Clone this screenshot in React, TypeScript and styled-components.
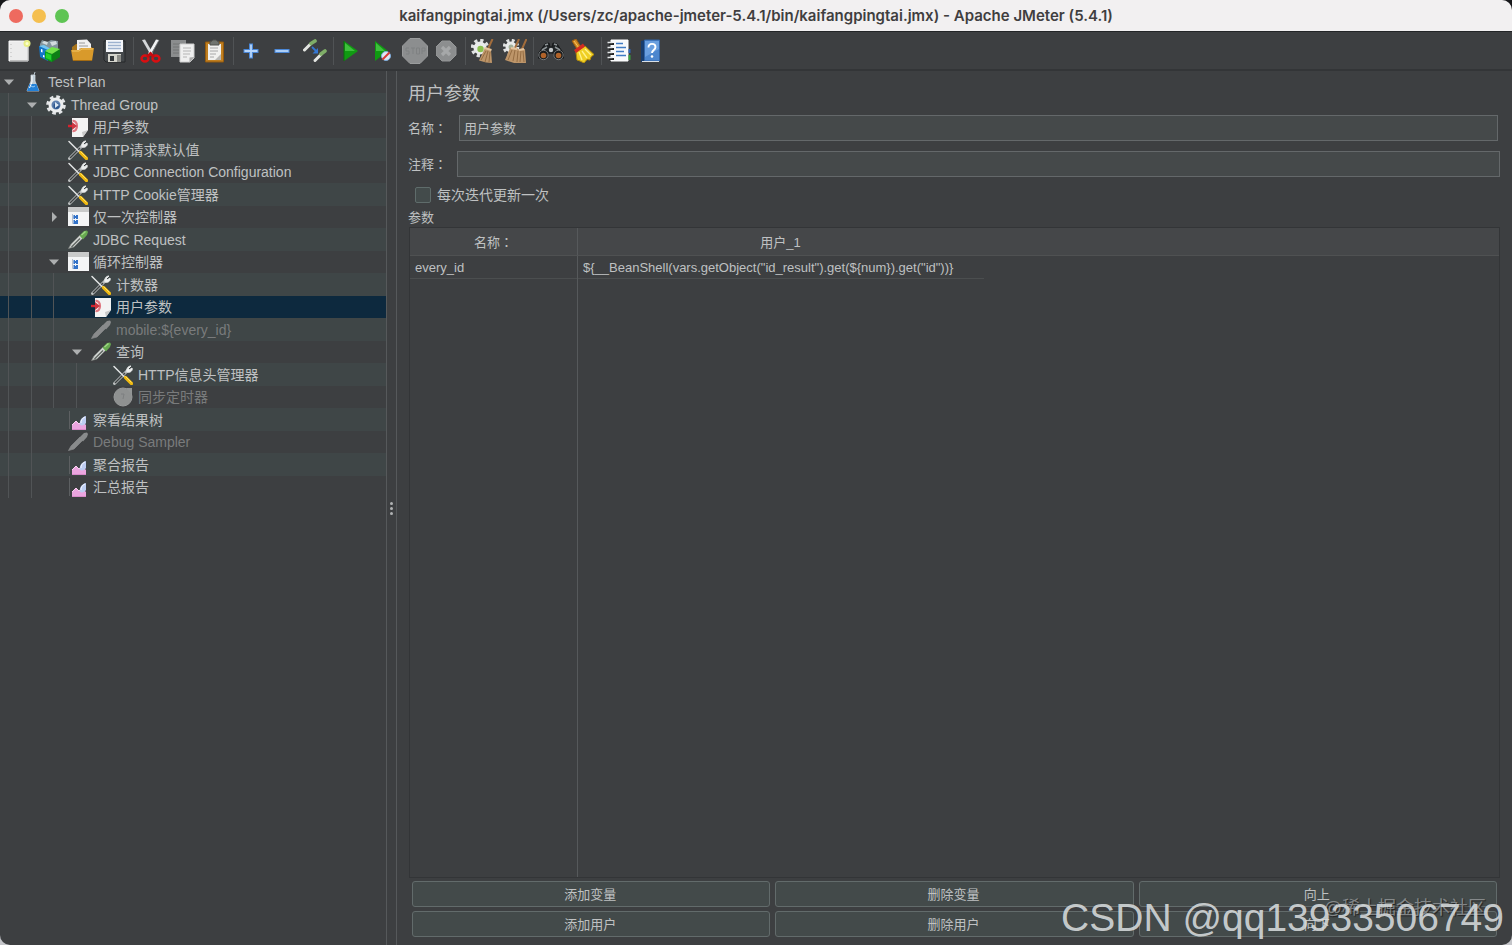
import React from 'react';
import styled, { createGlobalStyle, css } from 'styled-components';

const sans = `"Liberation Sans", "Noto Sans CJK SC", sans-serif`;

const color = {
  panel: '#3d3f41',
  stripe: '#3f4647',
  selected: '#0d293e',
  field: '#45494a',
  line: '#56595b',
  edge: '#333537',
  fieldLine: '#64686a',
  text: '#bfc1c2',
  muted: '#797b7c',
};

const GlobalStyle = createGlobalStyle`
  html { background: linear-gradient(#17171a 50%, #c4c5c9 50%); height: 100%; }
  body { margin: 0; font-family: ${sans}; font-size: 14px; color: ${color.text}; }
  *, *::before, *::after { box-sizing: border-box; }
  svg { flex: none; }
`;

const Window = styled.div`
  position: relative;
  display: flex;
  flex-direction: column;
  min-height: 100vh;
  border-radius: 10px;
  overflow: hidden;
  background: ${color.panel};
`;

const TitleBar = styled.header`
  position: relative;
  display: flex;
  align-items: center;
  justify-content: center;
  height: 32px;
  background: #f2f0f1;
  border-bottom: 1px solid #232527;
`;

const Lights = styled.div`
  position: absolute;
  left: 9px;
  top: 9px;
  display: flex;
  gap: 9px;
`;

const Light = styled.button<{ $tone: string }>`
  width: 14px;
  height: 14px;
  padding: 0;
  border: 0;
  border-radius: 50%;
  background: ${(p) => p.$tone};
`;

const Title = styled.h1`
  margin: 0;
  font: 600 15px/30px Inter, sans-serif;
  color: #403e3f;
  white-space: nowrap;
`;

const Toolbar = styled.div`
  display: flex;
  align-items: center;
  height: 39px;
  padding-left: 3px;
  border-bottom: 2px solid ${color.edge};
`;

const ToolButton = styled.button`
  display: flex;
  align-items: center;
  justify-content: center;
  width: 32px;
  height: 32px;
  padding: 0;
  border: 0;
  background: none;
`;

const Separator = styled.span`
  width: 1px;
  height: 28px;
  margin: 0 1px 0 2px;
  background: #505355;
`;

const Body = styled.div`
  display: flex;
  flex: 1;
`;

const Tree = styled.ul`
  width: 386px;
  flex: none;
  margin: 0;
  padding: 0;
  list-style: none;
`;

const TreeRow = styled.li<{ $selected?: boolean; $disabled?: boolean }>`
  display: flex;
  align-items: center;
  height: 22px;
  line-height: 22px;
  white-space: nowrap;
  color: ${(p) => (p.$disabled ? color.muted : color.text)};
  &:nth-child(even) {
    height: 23px;
    background: ${color.stripe};
  }
  ${(p) =>
    p.$selected &&
    css`
      background: ${color.selected};
    `}
`;

const Guides = styled.span`
  display: flex;
  align-self: stretch;
  padding-left: 8px;
`;

const Guide = styled.span`
  align-self: stretch;
  width: 22px;
  border-left: 1px solid #515456;
  &:nth-child(odd) {
    width: 23px;
  }
`;

const Toggle = styled.span`
  display: flex;
  justify-content: center;
  width: 2px;
  margin-right: 13px;
`;

const NodeIcon = styled.span`
  display: flex;
  width: 20px;
  margin-right: 5px;
`;

const Divider = styled.div`
  display: flex;
  flex-direction: column;
  align-items: center;
  justify-content: center;
  gap: 2px;
  width: 11px;
  flex: none;
  border: 1px solid ${color.line};
  border-width: 0 1px;
`;

const Dot = styled.i`
  width: 3px;
  height: 3px;
  border-radius: 50%;
  background: #b0b2b3;
`;

const Editor = styled.main`
  display: flex;
  flex-direction: column;
  flex: 1;
  min-width: 0;
  padding: 9px 12px 8px 11px;
`;

const Heading = styled.h2`
  margin: 0 0 7px;
  font-size: 18px;
  line-height: 28px;
  font-weight: 400;
`;

const Field = styled.div<{ $inset?: boolean }>`
  display: flex;
  align-items: center;
  height: 26px;
  margin-bottom: 10px;
  padding-right: ${(p) => (p.$inset ? 2 : 0)}px;
`;

const FieldLabel = styled.label<{ $wide?: boolean }>`
  width: ${(p) => (p.$wide ? 51 : 49)}px;
  padding-bottom: 2px;
  white-space: nowrap;
  font-size: 13px;
`;

const Colon = styled.span`
  font-family: "Noto Sans CJK TC", sans-serif;
  line-height: 1;
`;

const TextInput = styled.input`
  flex: 1;
  min-width: 0;
  height: 26px;
  padding: 0 4px 2px;
  border: 1px solid ${color.fieldLine};
  background: ${color.field};
  color: ${color.text};
  font: 13px ${sans};
  outline: 0;
`;

const CheckLine = styled.label`
  display: flex;
  align-items: center;
  gap: 6px;
  height: 20px;
  margin: -2px 0 2px 7px;
  line-height: 18px;
`;

const CheckBox = styled.input`
  appearance: none;
  width: 16px;
  height: 16px;
  margin: 0;
  border: 1px solid #5f6c6b;
  border-radius: 2px;
  background: #434b4b;
`;

const Caption = styled.div`
  height: 20px;
  line-height: 22px;
  font-size: 13px;
`;

const TableFrame = styled.div`
  display: flex;
  flex: 1;
  margin-left: 1px;
  border: 1px solid ${color.edge};
`;

const ParamTable = styled.table`
  width: 100%;
  border-spacing: 0;
  table-layout: fixed;
  font-size: 13px;
`;

const HeadCell = styled.th<{ $name?: boolean }>`
  width: ${(p) => (p.$name ? '168px' : 'auto')};
  height: 28px;
  padding: 0 ${(p) => (p.$name ? 0 : 516)}px 0 0;
  border-right: ${(p) => (p.$name ? 1 : 0)}px solid ${color.line};
  border-bottom: 1px solid #4f5152;
  background: #454749;
  font-weight: 400;
`;

const Cell = styled.td<{ $name?: boolean }>`
  height: 23px;
  padding: 0 5px;
  border-right: ${(p) => (p.$name ? 1 : 0)}px solid ${color.line};
  background: linear-gradient(#4b4e4f, #4b4e4f) left bottom / 406px 1px no-repeat;
`;

const Filler = styled.td<{ $name?: boolean }>`
  padding: 0;
  border-right: ${(p) => (p.$name ? 1 : 0)}px solid ${color.line};
`;

const Actions = styled.div`
  display: grid;
  grid-template-columns: repeat(3, 1fr);
  gap: 4px 5px;
  padding: 3px 3px 0 4px;
`;

const ActionButton = styled.button`
  height: 26px;
  padding: 0 2px 2px 0;
  border: 1px solid #626b6b;
  border-radius: 3px;
  background: #434a4a;
  color: ${color.text};
  font: 13px ${sans};
`;

const Watermark = styled.div`
  position: absolute;
  right: 8px;
  bottom: 2px;
  font-size: 39px;
  line-height: 50px;
  color: rgba(214, 218, 220, 0.9);
  white-space: nowrap;
  pointer-events: none;
`;

const SmallMark = styled(Watermark)`
  right: 26px;
  bottom: 25px;
  font-size: 18px;
  line-height: 24px;
  color: rgba(165, 168, 170, 0.7);
  text-shadow: 1px 1px 1px #222;
`;

/* ---------- tool bar drawings ---------- */

const Svg = ({ size = 24, box = 24, children }: { size?: number; box?: number; children: React.ReactNode }) => (
  <svg width={size} height={size} viewBox={`0 0 ${box} ${box}`} fill="none" aria-hidden="true">
    {children}
  </svg>
);

const NewIcon = () => (
  <Svg>
    <path d="M2 2h19v20H2z" fill="#ececec" stroke="#fafafa" />
    <path d="M4 5v14" stroke="#bbb" strokeDasharray="1 3" />
    <path d="M3 21.500h18V6" stroke="#bdbdbd" />
    <circle cx="20" cy="4.500" r="3.500" fill="#e8ef86" />
    <circle cx="20" cy="4.500" r="1.500" fill="#fbffd0" />
  </Svg>
);
const TemplatesIcon = () => (
  <Svg>
    <g transform="translate(-1 0)">
      <path d="M2 5l2-4 5 2 4-2 7 1v8l-9 5-9-5z" fill="#82949c" />
      <path d="M4 4l2-2 4 1-1 3zM12 3l6-1 1 3-5 2z" fill="#d2dbde" />
      <path d="M1 7l9 3v12l-8-4z" fill="#1377c9" />
      <path d="M1 7l5-1 7 4-3 1z" fill="#6fc5f5" />
      <path d="M3 10l1.500.5v3L3 13zM5 16l1.500.5v2L5 18z" fill="#fff" />
      <path d="M7 12l7 3v8l-7-3z" fill="#08a31b" />
      <path d="M14 14l8-4v8l-8 5z" fill="#0c7f15" />
      <path d="M7 12l7-4 8 2-8 5z" fill="#72e34a" />
      <path d="M8 14l5 2v5l-5-2z" fill="#25d32c" />
    </g>
  </Svg>
);
const OpenIcon = () => (
  <Svg>
    <path d="M1 8l4-3h4l2 3h10v6H1z" fill="#a8741b" />
    <path d="M6 1l10-.5 4 4.500v9H6z" fill="#f1f1f1" />
    <path d="M8 4h6M8 7h9M8 10h9" stroke="#9a9a9a" />
    <path d="M0 11h8l2-2h13l-2 13H2z" fill="#d99a2b" />
    <path d="M1 12h7l3-2h11" stroke="#f3c566" />
    <path d="M2 21.500h19" stroke="#a56c12" />
  </Svg>
);
const SaveIcon = () => (
  <Svg>
    <path d="M1 2h21v21H3l-2-2z" fill="#44484b" stroke="#27292b" />
    <path d="M3 1h17v12H3z" fill="#f4f6fa" />
    <path d="M5 3.500h13M5 6.500h13M5 9.500h13" stroke="#9db2cf" strokeWidth="1.300" />
    <path d="M5 15h13v8H5z" fill="#d5d5cd" />
    <path d="M7 17h4v5H7z" fill="#33373a" />
    <path d="M14 16h4v7h-4z" fill="#8c8d88" />
  </Svg>
);
const CutIcon = () => (
  <Svg>
    <path d="M3 1l3-.5 8 14-2 2z" fill="#d5d8da" />
    <path d="M20 1l-3-.5-8 14 2 2z" fill="#f2f3f4" />
    <path d="M20 1l-8 15" stroke="#85898c" strokeWidth=".7" />
    <ellipse cx="6" cy="19.500" rx="3.500" ry="3" stroke="#d80f12" strokeWidth="2.400" />
    <ellipse cx="17" cy="19.500" rx="3.500" ry="3" stroke="#d80f12" strokeWidth="2.400" />
    <path d="M8 18l3.500-3.500L15 18" stroke="#c40c0f" strokeWidth="3" />
  </Svg>
);
const CopyIcon = () => (
  <Svg>
    <path d="M0 1h15v17H0z" fill="#8b8d8e" />
    <path d="M2 5h9M2 8h9M2 11h6M2 14h6" stroke="#727475" />
    <path d="M9 5h14v14l-4 4H9z" fill="#efefef" stroke="#cfcfcf" />
    <path d="M12 9h8M12 12h8M12 15h7M12 18h4" stroke="#b5b5b5" />
    <path d="M23.500 18l-5 .5v5z" fill="#aaa" />
  </Svg>
);
const PasteIcon = () => (
  <Svg>
    <path d="M2.500 3h18v20h-18z" fill="#c07f20" stroke="#935a0e" />
    <path d="M5 5h13v16H5z" fill="#f1f1ef" />
    <path d="M7 6V3l2-1 1-1h3l1 1 2 1v3z" fill="#70746f" stroke="#50534f" />
    <path d="M7 9h8M7 12h8M7 15h6M7 18h4" stroke="#a8a8a8" />
    <path d="M18 15l-6 6h6z" fill="#b9b9b7" />
  </Svg>
);
const PlusIcon = () => (
  <Svg>
    <path d="M12 4.500v15M4.500 12h15" stroke="#4b87d6" strokeWidth="4" />
    <path d="M12 5.500v13M5.500 12h13" stroke="#b7d6fb" strokeWidth="1.800" />
  </Svg>
);
const MinusIcon = () => (
  <Svg>
    <path d="M3.500 12h15" stroke="#4b87d6" strokeWidth="4" />
    <path d="M4.500 12h13" stroke="#b7d6fb" strokeWidth="1.800" />
  </Svg>
);
const ToggleIcon = () => (
  <Svg>
    <path d="M1.500 11l6-6" stroke="#e4e6e2" strokeWidth="3" strokeLinecap="round" />
    <path d="M8 4.500L12 2" stroke="#7fae68" strokeWidth="3.600" strokeLinecap="round" />
    <path d="M12 21.500l6-6" stroke="#e4e6e2" strokeWidth="3" strokeLinecap="round" />
    <path d="M18 15l4-3" stroke="#7fae68" strokeWidth="3.600" strokeLinecap="round" />
    <path d="M9 8l4 4" stroke="#3477d2" strokeWidth="1.800" />
    <path d="M15 9v5.500H9.500z" fill="#3477d2" />
  </Svg>
);
const PlayIcon = () => (
  <Svg>
    <path d="M5 2l14 10L5 22z" fill="#109a12" />
    <path d="M6 4l10 8H6z" fill="#3fc03d" />
    <path d="M5 2v20" stroke="#0a6e0c" />
  </Svg>
);
const PlayNoPauseIcon = () => (
  <Svg>
    <path d="M4 2l13 10L4 22z" fill="#109a12" />
    <path d="M5 4l9 8H5z" fill="#3fc03d" />
    <circle cx="15" cy="17" r="4.500" fill="#dce8f5" stroke="#7eaddd" />
    <path d="M11.500 20.500l7-7" stroke="#d63b36" strokeWidth="2" />
  </Svg>
);
const StopIcon = () => (
  <Svg size={26} box={26}>
    <path d="M8 .5h10L25.500 8v10L18 25.500H8L.5 18V8z" fill="#8c8e8f" stroke="#9a9c9d" />
    <path d="M7 10H4v3h3v3H4M9 10h4M11 10v6M14.500 10h3v6h-3zM20 16v-6h3v3h-3" stroke="#7f8182" />
  </Svg>
);
const ShutdownIcon = () => (
  <Svg size={22} box={22}>
    <path d="M6 1h8l6 6v8l-6 6H6l-6-6V7z" fill="#8c8e8f" stroke="#949697" />
    <path d="M6 7l8 8M14 7l-8 8" stroke="#a6a8a9" strokeWidth="3.200" />
  </Svg>
);

const Gear = ({ x, y, r }: { x: number; y: number; r: number }) => (
  <g transform={`translate(${x} ${y})`}>
    <circle r={r} stroke="#dfe1e1" strokeWidth="3.500" strokeDasharray={`${r * 0.42} ${r * 0.365}`} />
    <circle r={r - 1} fill="#e9ebeb" />
  </g>
);
const ClearIcon = () => (
  <Svg>
    <Gear x={9} y={9} r={7.500} />
    <circle cx="9.500" cy="10" r="3.200" fill="#8cc04f" />
    <path d="M21.500 0l-4.500 10" stroke="#a36d3c" strokeWidth="2" />
    <path d="M14 9l6 2 1 13-6-.5-7-2z" fill="#bd9569" />
    <path d="M15 12l-5 9M17 12l-3 11M19 13l-1 10" stroke="#8a6238" strokeWidth=".8" />
    <path d="M13.500 9l7 2" stroke="#e5c49d" strokeWidth="2" />
  </Svg>
);
const ClearAllIcon = () => (
  <Svg>
    <Gear x={8} y={8} r={6.500} />
    <circle cx="8" cy="8" r="2.500" fill="#a3b09a" />
    <path d="M16 0l-4 9M23.500 0L19 10" stroke="#a36d3c" strokeWidth="2" />
    <path d="M7 9l7 0 2 2 6-1 1 14H11l-9-3z" fill="#bd9569" />
    <path d="M9 11l-4 10M12 11l-2 11M15 12l-1 11M18 12l-1 11M20 12l1 11" stroke="#8a6238" strokeWidth=".8" />
    <path d="M8 9l6 1M16 11l5-1" stroke="#e5c49d" strokeWidth="2" />
  </Svg>
);
const SearchIcon = () => (
  <Svg size={26} box={26}>
    <path d="M7 6l4-1 1 4h2l1-4 4 1 7 10v4h-9l-2-5h-4l-2 5H0v-4z" fill="#202426" stroke="#17191a" />
    <path d="M7 7l3-1M16 6l3 1M4 12l5-3M17 9l5 3" stroke="#8d9396" strokeWidth="1.500" />
    <circle cx="5.500" cy="17" r="4.700" fill="#191b1c" stroke="#75797b" />
    <circle cx="20.500" cy="17" r="4.700" fill="#191b1c" stroke="#75797b" />
    <circle cx="5.500" cy="17.500" r="2.800" fill="#b0632a" />
    <circle cx="20.500" cy="17.500" r="2.800" fill="#b0632a" />
    <circle cx="13" cy="12" r="2.200" fill="#c3c7c9" />
  </Svg>
);
const BroomIcon = () => (
  <Svg>
    <path d="M1 2l4-2 5 8-4 2z" fill="#d28a23" stroke="#9b5e13" />
    <path d="M3 2l5 7" stroke="#f5c25b" />
    <path d="M5 13l9-6 9 8.500-3 2.500-1 3-3-.5-3 3.500-4-2-3-1z" fill="#efcf24" stroke="#b38b0b" />
    <path d="M8 13l3 8M11 12l5 7M14 10l6 6" stroke="#fff28a" strokeWidth="1.300" />
    <path d="M4 12.500l9-6.500" stroke="#d22b22" strokeWidth="3.400" />
  </Svg>
);
const ListIcon = () => (
  <Svg>
    <path d="M4 1h17v21H4z" fill="#f7f9fb" stroke="#fff" />
    <path d="M9 4.500h7M9 8.500h10M9 12.500h8M9 16.500h10" stroke="#3f7bc4" strokeWidth="1.700" />
    <path d="M21.500 10h2v4h-2z" fill="#2c67bd" />
    <path d="M21.500 16h2v5h-2z" fill="#39a03d" />
    <path d="M2 5h5M2 10h5M2 15h5M2 20h5" stroke="#1f2122" strokeWidth="2" />
    <path d="M.5 3.500h5M.5 8.500h5M.5 13.500h5M.5 18.500h5" stroke="#e4e6e7" strokeWidth="1.600" />
  </Svg>
);
const HelpIcon = () => (
  <Svg>
    <path d="M2 2l4-1v22H2z" fill="#183d6e" />
    <path d="M5.500 1h15v21h-15z" fill="#4c86ce" stroke="#3265a7" />
    <path d="M6 2h14v8L6 18z" fill="#6a9fdf" />
    <path d="M3 22.500h17" stroke="#d9dfe5" />
    <path d="M9.500 8.500c0-5 7-4.500 7-.5 0 3-3.500 3-3.500 6" stroke="#fff" strokeWidth="1.900" />
    <circle cx="13" cy="17.500" r="1.300" fill="#fff" />
  </Svg>
);

/* ---------- tree drawings ---------- */

const FlaskIcon = () => (
  <Svg size={20} box={20}>
    <path d="M8 3h4v6l4 10H4L8 9z" fill="#bccbd6" stroke="#dbe3e8" strokeWidth=".7" />
    <path d="M6.500 12h7l2.500 7H4z" fill="#2381d8" />
    <path d="M8 14l2 1 2-1" stroke="#93ccfa" />
    <path d="M9 4v6L6.500 16" stroke="#fff" />
    <path d="M11 3l1-3" stroke="#b9c6cf" />
  </Svg>
);
const ThreadIcon = () => (
  <Svg size={20} box={20}>
    <circle cx="10" cy="10" r="8.200" stroke="#e3e5e7" strokeWidth="3.200" strokeDasharray="3.600 2.840" />
    <circle cx="10" cy="10" r="6" fill="#5d7fae" stroke="#eceeef" strokeWidth="3" />
    <circle cx="10.500" cy="11" r="3" fill="#2c568e" />
    <path d="M9 7v6l4-3z" fill="#dce8f4" />
  </Svg>
);
const ParamIcon = () => (
  <Svg size={20} box={20}>
    <path d="M4 1h16v12l-5 7H4z" fill="#f3f3f3" />
    <path d="M20 13l-6 2 1 5z" fill="#c9c9c9" />
    <path d="M4.500 4c6-1 6 11 0 10" stroke="#df7780" strokeWidth="2.200" />
    <path d="M0 9h6" stroke="#d3222e" strokeWidth="2.400" />
    <path d="M4 5l5 4-5 4z" fill="#ce3540" />
  </Svg>
);
const ToolsIcon = () => (
  <Svg size={20} box={20}>
    <path d="M1.500 18.500L15 5" stroke="#b9bcbd" strokeWidth="3" strokeLinecap="round" />
    <path d="M2 18L12 8" stroke="#3c4041" strokeWidth="1.500" />
    <path d="M18 1l-3 3 1 1 3-2c1 3-2 5-5 4-1-3 1-6 4-6z" fill="#eef0f0" stroke="#e6e8e8" />
    <path d="M1 1.500l11 11" stroke="#e2e4e4" strokeWidth="1.500" strokeLinecap="round" />
    <path d="M12.500 12.500l6 6" stroke="#f0b90f" strokeWidth="3.200" strokeLinecap="round" />
    <path d="M12.500 11.500l6 6" stroke="#ffe063" strokeWidth="1" />
  </Svg>
);
const ControllerIcon = () => (
  <Svg size={22} box={22}>
    <path d="M0 1h21v19H0z" fill="#f4f5f6" />
    <path d="M0 1h21v5H0z" fill="#c9caca" />
    <path d="M4.500 8v9.500H7M4.500 11H7" stroke="#b4c0d0" />
    <path d="M5.500 9H7v1h1V9h2v4H8v-1H7v1H5.500zM5.500 14H7v1h1v-1h2v4H5.500z" fill="#3272c9" />
  </Svg>
);
const PipetteIcon = ({ off }: { off?: boolean }) => (
  <Svg size={20} box={20}>
    <path d="M.5 18.500l2.500-4.500 9-9 3 3-9 9z" fill={off ? '#898b8c' : '#d0d3d1'} stroke={off ? '#898b8c' : '#7b7f7c'} strokeWidth=".7" />
    {!off && <path d="M3.500 17L12 8.500" stroke="#5d625f" strokeWidth="1.200" />}
    <path d="M11.500 5.500L16 1l3-.5 1 1.500-1 3-4 4.500z" fill={off ? '#898b8c' : '#67a950'} />
    {!off && <path d="M13.500 5L17.500 1.500" stroke="#a2d787" strokeWidth="1.300" />}
  </Svg>
);
const TimerIcon = () => (
  <Svg size={20} box={20}>
    <circle cx="10" cy="10" r="9" fill="#8f9191" stroke="#999b9b" />
    <path d="M13 1h6v7z" fill="#939595" />
    <path d="M8 7h3l-1 5" stroke="#7d7f80" />
  </Svg>
);
const ReportIcon = () => (
  <Svg size={20} box={20}>
    <path d="M1.500 1v18" stroke="#5d6062" />
    <path d="M4 20v-5l4-4 3 3 3-3 4 4v5z" fill="#eba5df" />
    <path d="M4 15l4-4 3 3 2-2" stroke="#f8d1f0" />
    <path d="M18 6c-5 1-7 6-6 9 2 1 5 0 6-2z" fill="#bdcdf2" />
    <path d="M17 7c-3 1-4 4-4 6" stroke="#f5f8ff" />
    <path d="M4 19.500h14" stroke="#d98bca" />
  </Svg>
);
const Arrow = ({ open }: { open: boolean }) => (
  <Svg size={12} box={12}>
    <path d={open ? 'M1 3.500h10L6 9z' : 'M4 1l5 5-5 5z'} fill="#adafb0" />
  </Svg>
);

type Tool = { name: string; icon: React.ReactNode; disabled?: boolean };

const toolGroups: Tool[][] = [
  [
    { name: 'New', icon: <NewIcon /> },
    { name: 'Templates', icon: <TemplatesIcon /> },
    { name: 'Open', icon: <OpenIcon /> },
    { name: 'Save', icon: <SaveIcon /> },
  ],
  [
    { name: 'Cut', icon: <CutIcon /> },
    { name: 'Copy', icon: <CopyIcon /> },
    { name: 'Paste', icon: <PasteIcon /> },
  ],
  [
    { name: 'Expand all', icon: <PlusIcon /> },
    { name: 'Collapse all', icon: <MinusIcon /> },
    { name: 'Toggle', icon: <ToggleIcon /> },
  ],
  [
    { name: 'Start', icon: <PlayIcon /> },
    { name: 'Start no pauses', icon: <PlayNoPauseIcon /> },
    { name: 'Stop', icon: <StopIcon />, disabled: true },
    { name: 'Shutdown', icon: <ShutdownIcon />, disabled: true },
  ],
  [
    { name: 'Clear', icon: <ClearIcon /> },
    { name: 'Clear all', icon: <ClearAllIcon /> },
  ],
  [
    { name: 'Search', icon: <SearchIcon /> },
    { name: 'Reset search', icon: <BroomIcon /> },
  ],
  [
    { name: 'Function helper', icon: <ListIcon /> },
    { name: 'Help', icon: <HelpIcon /> },
  ],
];

type Node = {
  label: string;
  depth: number;
  icon: React.ReactNode;
  open?: boolean;
  selected?: boolean;
  disabled?: boolean;
};

const nodes: Node[] = [
  { label: 'Test Plan', depth: 0, icon: <FlaskIcon />, open: true },
  { label: 'Thread Group', depth: 1, icon: <ThreadIcon />, open: true },
  { label: '用户参数', depth: 2, icon: <ParamIcon /> },
  { label: 'HTTP请求默认值', depth: 2, icon: <ToolsIcon /> },
  { label: 'JDBC Connection Configuration', depth: 2, icon: <ToolsIcon /> },
  { label: 'HTTP Cookie管理器', depth: 2, icon: <ToolsIcon /> },
  { label: '仅一次控制器', depth: 2, icon: <ControllerIcon />, open: false },
  { label: 'JDBC Request', depth: 2, icon: <PipetteIcon /> },
  { label: '循环控制器', depth: 2, icon: <ControllerIcon />, open: true },
  { label: '计数器', depth: 3, icon: <ToolsIcon /> },
  { label: '用户参数', depth: 3, icon: <ParamIcon />, selected: true },
  { label: 'mobile:${every_id}', depth: 3, icon: <PipetteIcon off />, disabled: true },
  { label: '查询', depth: 3, icon: <PipetteIcon />, open: true },
  { label: 'HTTP信息头管理器', depth: 4, icon: <ToolsIcon /> },
  { label: '同步定时器', depth: 4, icon: <TimerIcon />, disabled: true },
  { label: '察看结果树', depth: 2, icon: <ReportIcon /> },
  { label: 'Debug Sampler', depth: 2, icon: <PipetteIcon off />, disabled: true },
  { label: '聚合报告', depth: 2, icon: <ReportIcon /> },
  { label: '汇总报告', depth: 2, icon: <ReportIcon /> },
];

const actions = ['添加变量', '删除变量', '向上', '添加用户', '删除用户', '向下'];

export default function App() {
  return (
    <>
      <GlobalStyle />
      <Window>
        <TitleBar>
          <Lights>
            <Light $tone="#ee6a5f" aria-label="Close" />
            <Light $tone="#f5bf4f" aria-label="Minimize" />
            <Light $tone="#5fc454" aria-label="Zoom" />
          </Lights>
          <Title>kaifangpingtai.jmx (/Users/zc/apache-jmeter-5.4.1/bin/kaifangpingtai.jmx) - Apache JMeter (5.4.1)</Title>
        </TitleBar>
        <Toolbar role="toolbar">
          {toolGroups.map((group, i) => (
            <React.Fragment key={i}>
              {i > 0 && <Separator />}
              {group.map((tool) => (
                <ToolButton key={tool.name} aria-label={tool.name} disabled={tool.disabled}>
                  {tool.icon}
                </ToolButton>
              ))}
            </React.Fragment>
          ))}
        </Toolbar>
        <Body>
          <Tree role="tree">
            {nodes.map((node, i) => (
              <TreeRow
                key={i}
                role="treeitem"
                aria-level={node.depth + 1}
                aria-expanded={node.open}
                aria-selected={!!node.selected}
                $selected={node.selected}
                $disabled={node.disabled}
              >
                <Guides>
                  {Array.from({ length: node.depth }, (_, d) => (
                    <Guide key={d} />
                  ))}
                </Guides>
                <Toggle>{node.open !== undefined && <Arrow open={node.open} />}</Toggle>
                <NodeIcon>{node.icon}</NodeIcon>
                {node.label}
              </TreeRow>
            ))}
          </Tree>
          <Divider role="separator">
            <Dot />
            <Dot />
            <Dot />
          </Divider>
          <Editor>
            <Heading>用户参数</Heading>
            <Field $inset>
              <FieldLabel $wide htmlFor="name">
                名称<Colon>：</Colon>
              </FieldLabel>
              <TextInput id="name" defaultValue="用户参数" />
            </Field>
            <Field>
              <FieldLabel htmlFor="comment">
                注释<Colon>：</Colon>
              </FieldLabel>
              <TextInput id="comment" />
            </Field>
            <CheckLine>
              <CheckBox type="checkbox" />
              每次迭代更新一次
            </CheckLine>
            <Caption>参数</Caption>
            <TableFrame>
              <ParamTable>
                <thead>
                  <tr>
                    <HeadCell $name>
                      名称<Colon>：</Colon>
                    </HeadCell>
                    <HeadCell>用户_1</HeadCell>
                  </tr>
                </thead>
                <tbody>
                  <tr>
                    <Cell $name>every_id</Cell>
                    <Cell>{'${__BeanShell(vars.getObject("id_result").get(${num}).get("id"))}'}</Cell>
                  </tr>
                  <tr>
                    <Filler $name />
                    <Filler />
                  </tr>
                </tbody>
              </ParamTable>
            </TableFrame>
            <Actions>
              {actions.map((label) => (
                <ActionButton key={label}>{label}</ActionButton>
              ))}
            </Actions>
          </Editor>
        </Body>
        <SmallMark>@稀土掘金技术社区</SmallMark>
        <Watermark>CSDN @qq13933506749</Watermark>
      </Window>
    </>
  );
}
